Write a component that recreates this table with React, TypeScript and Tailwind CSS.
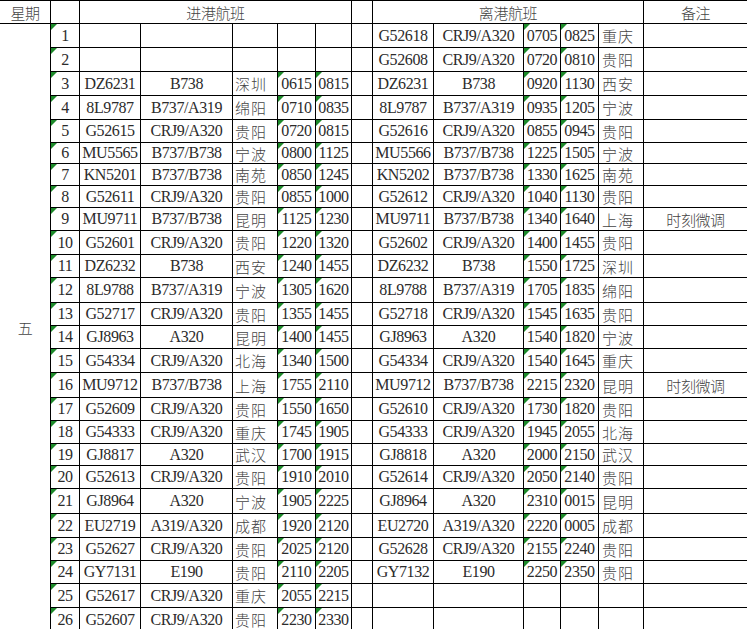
import React from 'react'

type Row = {
  arr: string[]
  dep: string[]
  note?: string
}

const E = ['', '', '', '', '']

const rows: Row[] = [
  { arr: E, dep: ['G52618', 'CRJ9/A320', '0705', '0825', '重庆'] },
  { arr: E, dep: ['G52608', 'CRJ9/A320', '0720', '0810', '贵阳'] },
  { arr: ['DZ6231', 'B738', '深圳', '0615', '0815'], dep: ['DZ6231', 'B738', '0920', '1130', '西安'] },
  { arr: ['8L9787', 'B737/A319', '绵阳', '0710', '0835'], dep: ['8L9787', 'B737/A319', '0935', '1205', '宁波'] },
  { arr: ['G52615', 'CRJ9/A320', '贵阳', '0720', '0815'], dep: ['G52616', 'CRJ9/A320', '0855', '0945', '贵阳'] },
  { arr: ['MU5565', 'B737/B738', '宁波', '0800', '1125'], dep: ['MU5566', 'B737/B738', '1225', '1505', '宁波'] },
  { arr: ['KN5201', 'B737/B738', '南苑', '0850', '1245'], dep: ['KN5202', 'B737/B738', '1330', '1625', '南苑'] },
  { arr: ['G52611', 'CRJ9/A320', '贵阳', '0855', '1000'], dep: ['G52612', 'CRJ9/A320', '1040', '1130', '贵阳'] },
  { arr: ['MU9711', 'B737/B738', '昆明', '1125', '1230'], dep: ['MU9711', 'B737/B738', '1340', '1640', '上海'], note: '时刻微调' },
  { arr: ['G52601', 'CRJ9/A320', '贵阳', '1220', '1320'], dep: ['G52602', 'CRJ9/A320', '1400', '1455', '贵阳'] },
  { arr: ['DZ6232', 'B738', '西安', '1240', '1455'], dep: ['DZ6232', 'B738', '1550', '1725', '深圳'] },
  { arr: ['8L9788', 'B737/A319', '宁波', '1305', '1620'], dep: ['8L9788', 'B737/A319', '1705', '1835', '绵阳'] },
  { arr: ['G52717', 'CRJ9/A320', '贵阳', '1355', '1455'], dep: ['G52718', 'CRJ9/A320', '1545', '1635', '贵阳'] },
  { arr: ['GJ8963', 'A320', '昆明', '1400', '1455'], dep: ['GJ8963', 'A320', '1540', '1820', '宁波'] },
  { arr: ['G54334', 'CRJ9/A320', '北海', '1340', '1500'], dep: ['G54334', 'CRJ9/A320', '1540', '1645', '重庆'] },
  { arr: ['MU9712', 'B737/B738', '上海', '1755', '2110'], dep: ['MU9712', 'B737/B738', '2215', '2320', '昆明'], note: '时刻微调' },
  { arr: ['G52609', 'CRJ9/A320', '贵阳', '1550', '1650'], dep: ['G52610', 'CRJ9/A320', '1730', '1820', '贵阳'] },
  { arr: ['G54333', 'CRJ9/A320', '重庆', '1745', '1905'], dep: ['G54333', 'CRJ9/A320', '1945', '2055', '北海'] },
  { arr: ['GJ8817', 'A320', '武汉', '1700', '1915'], dep: ['GJ8818', 'A320', '2000', '2150', '武汉'] },
  { arr: ['G52613', 'CRJ9/A320', '贵阳', '1910', '2010'], dep: ['G52614', 'CRJ9/A320', '2050', '2140', '贵阳'] },
  { arr: ['GJ8964', 'A320', '宁波', '1905', '2225'], dep: ['GJ8964', 'A320', '2310', '0015', '昆明'] },
  { arr: ['EU2719', 'A319/A320', '成都', '1920', '2120'], dep: ['EU2720', 'A319/A320', '2220', '0005', '成都'] },
  { arr: ['G52627', 'CRJ9/A320', '贵阳', '2025', '2120'], dep: ['G52628', 'CRJ9/A320', '2155', '2240', '贵阳'] },
  { arr: ['GY7131', 'E190', '贵阳', '2110', '2205'], dep: ['GY7132', 'E190', '2250', '2350', '贵阳'] },
  { arr: ['G52617', 'CRJ9/A320', '重庆', '2055', '2215'], dep: E },
  { arr: ['G52607', 'CRJ9/A320', '贵阳', '2230', '2330'], dep: E },
]

type CellProps = {
  children?: React.ReactNode
  mark?: boolean
  left?: boolean
  last?: boolean
  className?: string
}

const cjk = "font-['Noto_Sans_CJK_SC',sans-serif] text-[15px] font-light text-[#444]"

// excel-ish cell, green corner = "number stored as text"
const Cell: React.FC<CellProps> = ({ children, mark, left, last, className }) => (
  <div
    className={`relative flex items-center overflow-hidden whitespace-nowrap border-b border-black ${
      last ? '' : 'border-r'
    } ${left ? 'justify-start pl-[2px]' : 'justify-center'} ${className ?? ''}`}
  >
    {mark ? (
      <span className="absolute left-0 top-0 h-[6px] w-[6px] bg-[#1d8a2a] [clip-path:polygon(0_0,100%_0,0_100%)]" />
    ) : null}
    {children}
  </div>
)

export default function App() {
  return (
    <div className="min-h-screen w-[747px] bg-white font-['Liberation_Serif','Noto_Sans_CJK_SC',serif] text-[16px] leading-none tracking-[-0.4px] text-[#2b2b2b]">
      <div className="grid grid-cols-[51px_29px_61px_92px_45px_38px_36px_21px_61px_90px_37px_38px_45px_103px] grid-rows-[23px_24px_24px_24px_24px_23px_21px_22px_22px_23px_24px_23px_25px_23px_23px_24px_25px_23px_23px_22px_23px_25px_24px_23px_23px_24px_24px] border-t border-black">
        <Cell className={cjk}>星期</Cell>
        <Cell />
        <Cell className={`col-span-5 ${cjk}`}>进港航班</Cell>
        <Cell />
        <Cell className={`col-span-5 ${cjk}`}>离港航班</Cell>
        <Cell last className={cjk}>备注</Cell>

        <Cell className={`row-span-26 ${cjk}`}>五</Cell>

        {rows.map((r, i) => {
          const [af, at, ac, a1, a2] = r.arr
          const [df, dt, d1, d2, dc] = r.dep
          return (
            <React.Fragment key={i}>
              <Cell mark>{i + 1}</Cell>
              <Cell>{af}</Cell>
              <Cell>{at}</Cell>
              <Cell left className={`tracking-[1px] ${cjk}`}>{ac}</Cell>
              <Cell mark={!!a1}>{a1}</Cell>
              <Cell mark={!!a2}>{a2}</Cell>
              <Cell />
              <Cell>{df}</Cell>
              <Cell>{dt}</Cell>
              <Cell mark={!!d1}>{d1}</Cell>
              <Cell mark={!!d2}>{d2}</Cell>
              <Cell left className={`pl-[3px] tracking-[1px] ${cjk}`}>{dc}</Cell>
              <Cell last className={cjk}>{r.note}</Cell>
            </React.Fragment>
          )
        })}
      </div>
    </div>
  )
}
